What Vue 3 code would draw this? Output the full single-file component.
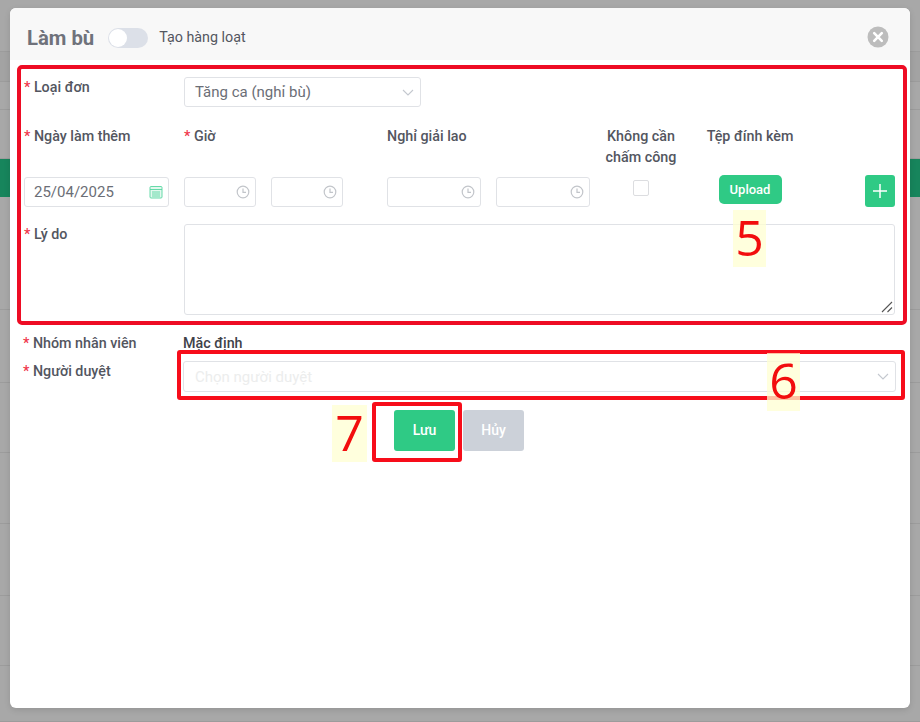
<template>
  <div class="page">
    <div class="backdrop">
      <div class="bg-row" style="height: 52px"></div>
      <div class="bg-row shade" style="height: 30px"></div>
      <div class="bg-row" style="height: 28px"></div>
      <div class="bg-row" style="height: 49px"></div>
      <div class="bg-green"></div>
      <div v-for="h in bgRows" :key="h" class="bg-row" :style="{ height: h + 'px' }"></div>
    </div>

    <div class="modal">
      <div class="modal-header">
        <h2>Làm bù</h2>
        <span class="switch"><span class="knob"></span></span>
        <span class="switch-label">Tạo hàng loạt</span>
        <svg class="close" width="22" height="22" viewBox="0 0 22 22">
          <circle cx="11" cy="11" r="10.5" fill="#bdbdbd" />
          <path d="M7.2 7.2l7.6 7.6M14.8 7.2l-7.6 7.6" stroke="#fff" stroke-width="2.6" stroke-linecap="round" />
        </svg>
      </div>

      <div class="modal-body">
        <div class="row-type">
          <label class="lbl"><i>*</i> Loại đơn</label>
          <div class="select type-select">
            <span>Tăng ca (nghỉ bù)</span>
            <svg width="12" height="7" viewBox="0 0 12 7"><path d="M1 1l5 5 5-5" fill="none" stroke="#c4c8cf" stroke-width="1.1" /></svg>
          </div>
        </div>

        <div class="grid">
          <label class="lbl"><i>*</i> Ngày làm thêm</label>
          <label class="lbl span2"><i>*</i> Giờ</label>
          <label class="lbl span2">Nghỉ giải lao</label>
          <label class="lbl center">Không cần<br />chấm công</label>
          <label class="lbl center">Tệp đính kèm</label>
          <span></span>

          <div class="input date">
            <span>25/04/2025</span>
            <svg width="14" height="14" viewBox="0 0 14 14" fill="none" stroke="#57d6a0" stroke-width="0.9">
              <rect x="1" y="1.5" width="12" height="11.5" rx="1" fill="#e3f8ee" />
              <path d="M1 4.5h12M3 7h8M3 9h8M3 11h8" />
            </svg>
          </div>
          <div v-for="t in timeInputs" :key="t.id" class="input time" :style="{ width: t.width + 'px' }">
            <svg width="14" height="14" viewBox="0 0 14 14" fill="none" stroke="#c2c5ca" stroke-width="1.2">
              <circle cx="7" cy="7" r="5.8" />
              <path d="M7 3.6V7.3h3" />
            </svg>
          </div>
          <div class="center-cell check-cell"><span class="checkbox"></span></div>
          <div class="center-cell"><button class="btn-upload">Upload</button></div>
          <div class="end-cell">
            <button class="btn-add">
              <svg width="16" height="16" viewBox="0 0 16 16"><path d="M8 1v14M1 8h14" stroke="#fff" stroke-width="1.5" /></svg>
            </button>
          </div>
        </div>

        <div class="row-reason">
          <label class="lbl"><i>*</i> Lý do</label>
          <div class="textarea">
            <svg class="grip" width="12" height="12" viewBox="0 0 12 12">
              <path d="M1 11L11 1M6.5 11L11 6.5" stroke="#555" stroke-width="1.1" />
            </svg>
          </div>
        </div>

        <div class="row-group">
          <label class="lbl"><i>*</i> Nhóm nhân viên</label>
          <strong>Mặc định</strong>
        </div>
        <div class="row-approver">
          <label class="lbl"><i>*</i> Người duyệt</label>
          <div class="select approver-select">
            <span class="placeholder">Chọn người duyệt</span>
            <svg width="12" height="7" viewBox="0 0 12 7"><path d="M1 1l5 5 5-5" fill="none" stroke="#c4c8cf" stroke-width="1.1" /></svg>
          </div>
        </div>

        <div class="actions">
          <button class="btn save">Lưu</button>
          <button class="btn cancel">Hủy</button>
        </div>
      </div>
    </div>

    <!-- annotations painted over the screenshot -->
    <div class="mark mark-5"></div>
    <div class="mark mark-6"></div>
    <div class="mark mark-7"></div>
    <span class="num num-5">5</span>
    <span class="num num-6">6</span>
    <span class="num num-7">7</span>
  </div>
</template>

<script setup>
const bgRows = [113, 73, 70, 71, 72, 70, 56]
const timeInputs = [
  { id: 1, width: 72 },
  { id: 2, width: 72 },
  { id: 3, width: 94 },
  { id: 4, width: 94 },
]
</script>

<style>
html,
body {
  margin: 0;
  overflow: hidden;
}
</style>

<style scoped>
.page {
  position: relative;
  width: 920px;
  height: 722px;
  overflow: hidden;
  background: #a8a8a8;
  font-family: Roboto, "Liberation Sans", sans-serif;
  color: #53565f;
}
.backdrop {
  display: flex;
  flex-direction: column;
  height: 100%;
}
.bg-row {
  flex: none;
  border-bottom: 1px solid #9c9c9c;
  box-sizing: border-box;
}
.shade {
  background: #a3a3a3;
}
.bg-green {
  flex: none;
  height: 38px;
  background: #17855c;
}

.modal {
  position: absolute;
  left: 10px;
  top: 8px;
  width: 900px;
  height: 700px;
  background: #fff;
  border-radius: 6px;
  overflow: hidden;
  box-shadow: 0 2px 6px rgba(0, 0, 0, 0.12);
}
.modal-header {
  height: 52px;
  box-sizing: border-box;
  display: flex;
  align-items: center;
  padding: 8px 21px 0 17px;
  background: #f8f8f8;
}
h2 {
  margin: 0;
  font-size: 20.3px;
  font-weight: 700;
  color: #6f727b;
}
.switch {
  width: 40px;
  height: 20px;
  margin-left: 14px;
  border-radius: 10px;
  background: #dce0e8;
  display: flex;
  align-items: center;
  padding-left: 1px;
  box-sizing: border-box;
}
.knob {
  width: 18px;
  height: 18px;
  border-radius: 50%;
  background: #fff;
}
.switch-label {
  margin-left: 11px;
  margin-top: -2px;
  font-size: 14.3px;
  color: #53565f;
}
.close {
  margin-left: auto;
  margin-top: -2px;
}

.modal-body {
  padding: 17px 14px 0;
}
.lbl {
  font-size: 14.3px;
  font-weight: 500;
  line-height: 21px;
  color: #53565f;
}
.lbl i {
  font-style: normal;
  color: #f0364a;
}
.row-type {
  display: grid;
  grid-template-columns: 160px 237px;
}
.select,
.input,
.textarea {
  box-sizing: border-box;
  background: #fff;
  border: 1px solid #e0e2e6;
  border-radius: 3px;
  font-size: 15px;
  color: #6b6e76;
}
.select {
  display: flex;
  align-items: center;
  justify-content: space-between;
  padding: 0 6px 0 10px;
}
.type-select {
  height: 30px;
}
.grid {
  display: grid;
  grid-template-columns: 160px 87px 116px 109px 94px 102px 116px 87px;
  grid-template-rows: 42px 30px;
  row-gap: 9px;
  margin-top: 19px;
}
.span2 {
  grid-column: span 2;
}
.center {
  text-align: center;
}
.input {
  height: 30px;
  display: flex;
  align-items: center;
}
.date {
  width: 145px;
  padding: 0 5px 0 9px;
  justify-content: space-between;
}
.time {
  justify-content: flex-end;
  padding-right: 5px;
}
.center-cell {
  display: flex;
  justify-content: center;
  align-items: flex-start;
  margin-top: -2px;
}
.check-cell {
  margin-top: 3px;
}
.end-cell {
  display: flex;
  justify-content: flex-end;
  margin-top: -2px;
}
.checkbox {
  width: 16px;
  height: 16px;
  box-sizing: border-box;
  border: 1px solid #dcdde0;
  border-radius: 2px;
  background: #fff;
}
button {
  border: 0;
  padding: 0;
  font-family: inherit;
  color: #fff;
  font-weight: 500;
  font-size: 13px;
}
.btn-upload {
  width: 63px;
  height: 29px;
  border-radius: 5px;
  background: #2fca85;
}
.btn-add {
  width: 30px;
  height: 32px;
  border-radius: 3px;
  background: #2fca85;
  display: flex;
  align-items: center;
  justify-content: center;
}
.row-reason {
  display: grid;
  grid-template-columns: 160px 711px;
  margin-top: 17px;
}
.textarea {
  position: relative;
  height: 91px;
}
.grip {
  position: absolute;
  right: 1px;
  bottom: 1px;
}
.row-group {
  display: flex;
  align-items: center;
  height: 21px;
  margin-top: 18px;
  margin-left: -1px;
}
.row-group .lbl {
  width: 160px;
}
.row-group strong {
  font-size: 14.3px;
  font-weight: 500;
  color: #3f4249;
  margin-top: -2px;
}
.row-approver {
  display: flex;
  margin-top: 7px;
  margin-left: -1px;
}
.row-approver .lbl {
  width: 160px;
  flex: none;
}
.approver-select {
  width: 713px;
  height: 31px;
}
.placeholder {
  color: #eceded;
  font-size: 15px;
  margin-left: 1px;
}
.actions {
  display: flex;
  gap: 8px;
  margin-top: 18px;
  margin-left: 370px;
}
.btn {
  width: 61px;
  height: 41px;
  padding-bottom: 2px;
  border-radius: 3px;
  font-size: 14px;
}
.save {
  background: #2fca85;
}
.cancel {
  background: #ccd1d9;
}

.mark {
  position: absolute;
  box-sizing: border-box;
  border-style: solid;
  border-width: 4px;
  border-color: #ee0c24;
  border-radius: 5px;
}
.mark-5 {
  left: 17px;
  top: 65px;
  width: 890px;
  height: 260px;
}
.mark-6 {
  left: 177px;
  top: 350px;
  width: 728px;
  height: 50px;
  border-color: #f70d1a;
  border-radius: 3px;
}
.mark-7 {
  left: 372px;
  top: 402px;
  width: 90px;
  height: 60px;
  border-color: #f70d1a;
  border-radius: 3px;
}
.num {
  position: absolute;
  text-align: center;
  font-family: "Open Sans", sans-serif;
  font-size: 50px;
  line-height: 54px;
  color: #f20d0d;
  background: rgba(255, 255, 210, 0.75);
}
.num-5 {
  left: 733px;
  top: 210px;
  width: 33px;
  height: 57px;
}
.num-6 {
  left: 767px;
  top: 353px;
  width: 33px;
  height: 58px;
}
.num-7 {
  left: 332px;
  top: 405px;
  width: 35px;
  height: 57px;
}
</style>
